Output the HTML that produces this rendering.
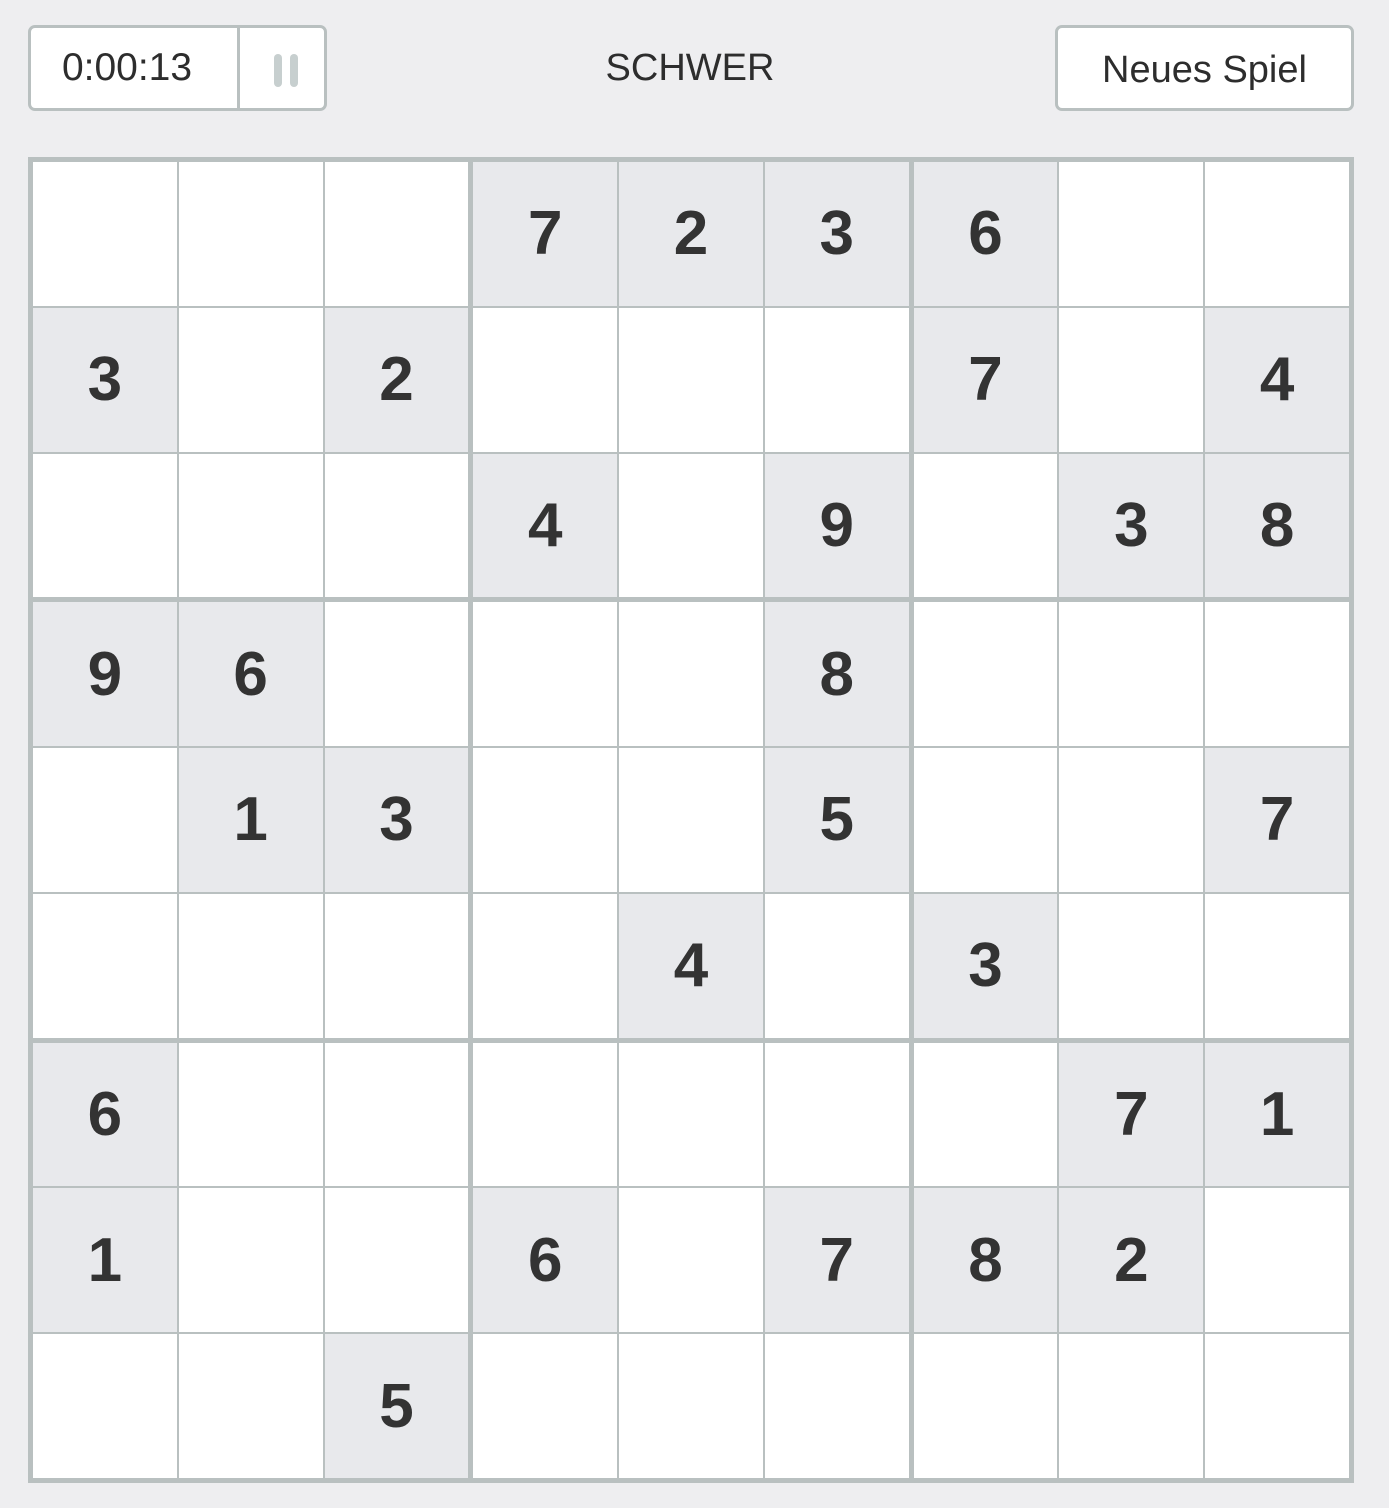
<!DOCTYPE html>
<html><head><meta charset="utf-8"><style>
body{margin:0;width:1389px;height:1508px;background:#eeeef0;font-family:"Liberation Sans",sans-serif;position:relative;overflow:hidden}
.timer{position:absolute;left:28px;top:25px;width:293px;height:80px;border:3px solid #b9c0c0;border-radius:7px;background:#fff;}
.timer .t{position:absolute;left:0;top:0;width:206px;height:80px;line-height:80px;text-align:center;font-size:39px;color:#2d2d2d;border-right:3px solid #b9c0c0;text-indent:-14px}
.bar{position:absolute;top:26px;width:8px;height:33px;border-radius:4px;background:#c7cfcf}
.lvl{position:absolute;left:540px;width:300px;top:25px;line-height:86px;text-align:center;font-size:38px;color:#2d2d2d}
.btn{position:absolute;left:1055px;top:25px;width:293px;height:80px;border:3px solid #b9c0c0;border-radius:7px;background:#fff;line-height:84px;text-align:center;font-size:38px;color:#2d2d2d}
.grid{position:absolute;left:28px;top:157px;width:1316px;height:1316px;border:5px solid #b9c0c0;background:#b9c0c0;display:grid;grid-template-columns:repeat(3,1fr);grid-template-rows:repeat(3,1fr);gap:5px}
.box{display:grid;grid-template-columns:repeat(3,1fr);grid-template-rows:repeat(3,1fr);gap:2px}
.box div{background:#fff;display:flex;align-items:center;justify-content:center;font-size:62px;font-weight:bold;color:#333}
.box div.g{background:#e8e9ec}
</style></head><body>
<div class="timer"><div class="t">0:00:13</div><div class="bar" style="left:243px"></div><div class="bar" style="left:259px"></div></div>
<div class="lvl">SCHWER</div>
<div class="btn">Neues Spiel</div>
<div class="grid">
<div class="box"><div></div><div></div><div></div><div class="g">3</div><div></div><div class="g">2</div><div></div><div></div><div></div></div>
<div class="box"><div class="g">7</div><div class="g">2</div><div class="g">3</div><div></div><div></div><div></div><div class="g">4</div><div></div><div class="g">9</div></div>
<div class="box"><div class="g">6</div><div></div><div></div><div class="g">7</div><div></div><div class="g">4</div><div></div><div class="g">3</div><div class="g">8</div></div>
<div class="box"><div class="g">9</div><div class="g">6</div><div></div><div></div><div class="g">1</div><div class="g">3</div><div></div><div></div><div></div></div>
<div class="box"><div></div><div></div><div class="g">8</div><div></div><div></div><div class="g">5</div><div></div><div class="g">4</div><div></div></div>
<div class="box"><div></div><div></div><div></div><div></div><div></div><div class="g">7</div><div class="g">3</div><div></div><div></div></div>
<div class="box"><div class="g">6</div><div></div><div></div><div class="g">1</div><div></div><div></div><div></div><div></div><div class="g">5</div></div>
<div class="box"><div></div><div></div><div></div><div class="g">6</div><div></div><div class="g">7</div><div></div><div></div><div></div></div>
<div class="box"><div></div><div class="g">7</div><div class="g">1</div><div class="g">8</div><div class="g">2</div><div></div><div></div><div></div><div></div></div>
</div>
</body></html>
